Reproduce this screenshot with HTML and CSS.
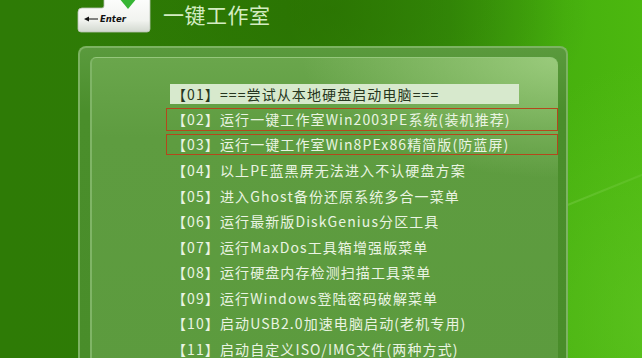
FILE: index.html
```html
<!DOCTYPE html>
<html lang="zh-CN">
<head>
  <meta charset="UTF-8" />
  <title>一键工作室 启动菜单</title>
  <link rel="stylesheet" href="styles.css">
</head>
<body>
  <div class="screen">
    <div class="streak"></div>
    <header class="top">
      <svg class="enter-key" width="74" height="34" viewBox="0 0 74 34">
        <defs>
          <linearGradient id="keyFill" x1="0" y1="0" x2="0" y2="1">
            <stop offset="0" stop-color="#ffffff" />
            <stop offset="0.7" stop-color="#f1f3ef" />
            <stop offset="1" stop-color="#d2d8cf" />
          </linearGradient>
        </defs>
        <path d="M27 -6 L71 -6 Q73 -6 73 -4 L73 29 Q73 32 70 32 L4 32 Q1 32 1 29 L1 12 Q1 8 5 8 L25 8 Q27 8 27 6 Z" fill="url(#keyFill)" stroke="#b9c4b4" stroke-width="0.8" />
        <path d="M42 -2 L60 -2 L51 9 Z" fill="#36b534" />
        <path d="M7 19 L12 16.5 L12 18.4 L21 18.4 L21 19.6 L12 19.6 L12 21.5 Z" fill="#111" />
        <text x="23" y="22" class="enter-text">Enter</text>
      </svg>
      <h1 class="title">一键工作室</h1>
    </header>
    <div class="frame">
      <div class="panel">
        <ul class="menu">
          <li><span class="item active">【01】===尝试从本地硬盘启动电脑===</span></li>
          <li><span class="item boxed">【02】运行一键工作室Win2003PE系统(装机推荐)</span></li>
          <li><span class="item boxed short">【03】运行一键工作室Win8PEx86精简版(防蓝屏)</span></li>
          <li><span class="item">【04】以上PE蓝黑屏无法进入不认硬盘方案</span></li>
          <li><span class="item">【05】进入Ghost备份还原系统多合一菜单</span></li>
          <li><span class="item">【06】运行最新版DiskGenius分区工具</span></li>
          <li><span class="item">【07】运行MaxDos工具箱增强版菜单</span></li>
          <li><span class="item">【08】运行硬盘内存检测扫描工具菜单</span></li>
          <li><span class="item">【09】运行Windows登陆密码破解菜单</span></li>
          <li><span class="item">【10】启动USB2.0加速电脑启动(老机专用)</span></li>
          <li><span class="item">【11】启动自定义ISO/IMG文件(两种方式)</span></li>
        </ul>
      </div>
    </div>
  </div>
</body>
</html>
```

FILE: styles.css
```css
:root {
  --frame-edge: #7cb362;
  --text: #eaf4e2;
  --band: #d7e9cd;
  --band-text: #263620;
  --box: #b4471c;
}
html, body {
  margin: 0;
  padding: 0;
}
body {
  width: 642px;
  height: 358px;
  overflow: hidden;
  font-family: "Noto Sans CJK SC", "Noto Sans", sans-serif;
}
.screen {
  position: relative;
  width: 642px;
  height: 358px;
  overflow: hidden;
  background:
    radial-gradient(ellipse 260px 160px at 330px 10px, rgba(40, 110, 0, 0.6), rgba(40, 110, 0, 0) 100%),
    radial-gradient(ellipse 200px 260px at 660px 320px, rgba(100, 200, 40, 0.55), rgba(100, 200, 40, 0) 100%),
    linear-gradient(90deg, #2e7b06 0%, #2e7c05 45%, #36900a 70%, #47b10e 88%, #4cb80f 100%);
}
.streak {
  position: absolute;
  left: 330px;
  top: 300px;
  width: 360px;
  height: 2px;
  background: linear-gradient(90deg, rgba(170, 230, 130, 0), rgba(170, 230, 130, 0.35) 40%, rgba(170, 230, 130, 0.1));
  transform: rotate(-22deg);
  transform-origin: left center;
}
.top {
  display: flex;
  align-items: flex-start;
  gap: 12px;
  height: 46px;
  padding-left: 77px;
}
.enter-key {
  display: block;
  overflow: visible;
}
.enter-text {
  font-family: "DejaVu Sans", sans-serif;
  font-size: 8.5px;
  font-weight: bold;
  font-style: italic;
  fill: #111;
}
.title {
  margin: 0;
  font-size: 21px;
  font-weight: 400;
  line-height: 28px;
  letter-spacing: 0.5px;
  color: #d3ecc2;
}
.frame {
  position: relative;
  margin-left: 78px;
  width: 468px;
  height: 320px;
  padding: 9px 8px 0 10px;
  border: 2px solid var(--frame-edge);
  border-bottom: none;
  border-radius: 8px 8px 0 0;
  background: linear-gradient(180deg, #5a9a3d 0%, #4a8e2b 20%, #498d2a 100%);
}
.panel {
  height: 320px;
  border-top: 1px solid #95c77c;
  border-left: 2px solid #7fb566;
  border-radius: 6px 8px 0 0;
  background:
    radial-gradient(ellipse 260px 120px at 470px 0px, rgba(170, 215, 140, 0.75), rgba(170, 215, 140, 0) 100%),
    linear-gradient(180deg, #6aa64c 0%, #5e9c40 25%, #5c9b3e 100%);
}
.menu {
  list-style: none;
  margin: 0;
  padding: 23px 0 0 74px;
}
.menu li {
  display: flex;
  align-items: center;
  height: 25.5px;
}
.item {
  display: block;
  padding-left: 6px;
  font-size: 14px;
  line-height: 20px;
  letter-spacing: 1.1px;
  color: var(--text);
  white-space: nowrap;
}
.item.active {
  margin-left: 4px;
  width: 347px;
  padding-left: 2px;
  background: var(--band);
  color: var(--band-text);
}
.item.boxed {
  width: 391px;
  height: 21px;
  padding-left: 5px;
  border: 1px solid var(--box);
  line-height: 21px;
}
.item.boxed.short {
  height: 19px;
  line-height: 19px;
}
```
